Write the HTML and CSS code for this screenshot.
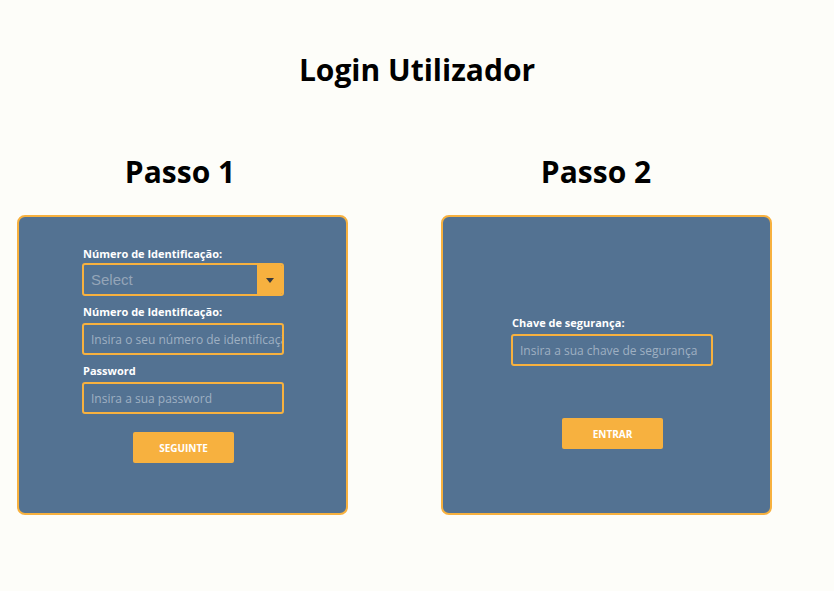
FILE: index.html
```html
<!DOCTYPE html>
<html lang="pt">
<head>
<meta charset="utf-8">
<title>Login Utilizador</title>
<link rel="stylesheet" href="styles.css">
</head>
<body>
<h1 class="title">Login Utilizador</h1>
<div class="steps">
  <section class="step">
    <h2 class="step-title">Passo 1</h2>
    <div class="card card-one">
      <form class="form">
        <label class="label">Número de Identificação:</label>
        <div class="select-wrap">
          <select class="select"><option>Select</option></select>
          <span class="select-btn"><span class="arrow"></span></span>
        </div>
        <label class="label label-gap">Número de Identificação:</label>
        <input class="input" type="text" placeholder="Insira o seu número de identificação">
        <label class="label label-gap">Password</label>
        <input class="input" type="password" placeholder="Insira a sua password">
        <button class="btn btn-one" type="button">SEGUINTE</button>
      </form>
    </div>
  </section>
  <section class="step step-two">
    <h2 class="step-title">Passo 2</h2>
    <div class="card card-two">
      <form class="form">
        <label class="label">Chave de segurança:</label>
        <input class="input" type="text" placeholder="Insira a sua chave de segurança">
        <button class="btn btn-two" type="button">ENTRAR</button>
      </form>
    </div>
  </section>
</div>
</body>
</html>
```
FILE: styles.css
```css
* { box-sizing: border-box; }
html, body {
  margin: 0;
  padding: 0;
  background: #fdfdf9;
  font-family: "Open Sans", "Liberation Sans", sans-serif;
  color: #000;
}
.title {
  margin: 52px 0 0 0;
  font-size: 30px;
  line-height: 36px;
  font-weight: 700;
  text-align: center;
}
.steps {
  display: flex;
  gap: 56px;
  margin-top: 66px;
}
.step {
  width: 360px;
}
.step-title {
  margin: 0;
  font-size: 30px;
  line-height: 36px;
  font-weight: 700;
  text-align: center;
}
.card {
  margin-top: 25px;
  width: 331px;
  height: 300px;
  background: #537292;
  border: 2px solid #f7b13f;
  border-radius: 8px;
}
.card-one { margin-left: 17px; padding: 30px 0 0 63px; }
.card-two { margin-left: 25px; padding: 99px 0 0 68px; }
.form {
  width: 202px;
  display: flex;
  flex-direction: column;
}
.label {
  display: block;
  font-size: 11px;
  line-height: 14px;
  font-weight: 700;
  color: #fff;
  margin-bottom: 2px;
  padding-left: 1px;
}
.label-gap { margin-top: 9px; margin-bottom: 4px; }
.card-two .label { margin-bottom: 4px; }
.select-wrap {
  display: flex;
  height: 33px;
  border: 2px solid #f7b13f;
  border-radius: 3px;
  overflow: hidden;
}
.select {
  flex: 1;
  min-width: 0;
  appearance: none;
  -webkit-appearance: none;
  background: transparent;
  border: 0;
  outline: 0;
  padding: 0 7px;
  font-family: "Liberation Sans", Arial, sans-serif;
  font-size: 15px;
  color: #95a5b8;
}
.select-btn {
  width: 25px;
  background: #f7b13f;
  display: flex;
  align-items: center;
  justify-content: center;
}
.arrow {
  width: 0;
  height: 0;
  border-left: 4px solid transparent;
  border-right: 4px solid transparent;
  border-top: 5px solid #3b3b3b;
  margin-top: 1px;
}
.input {
  height: 32px;
  width: 100%;
  background: transparent;
  border: 2px solid #f7b13f;
  border-radius: 3px;
  padding: 0 0 0 7px;
  font-family: "Open Sans", sans-serif;
  font-size: 12px;
  color: #fff;
  outline: 0;
}
.input::placeholder { color: #9fb0c2; }
.btn {
  align-self: center;
  width: 101px;
  height: 31px;
  background: #f7b13f;
  border: 0;
  border-radius: 2px;
  color: #fff;
  font-family: "Open Sans", sans-serif;
  font-weight: 700;
  font-size: 10px;
  margin-left: 1px;
  padding: 0;
}
.btn-one { margin-top: 18px; }
.btn-two { margin-top: 52px; }
```
